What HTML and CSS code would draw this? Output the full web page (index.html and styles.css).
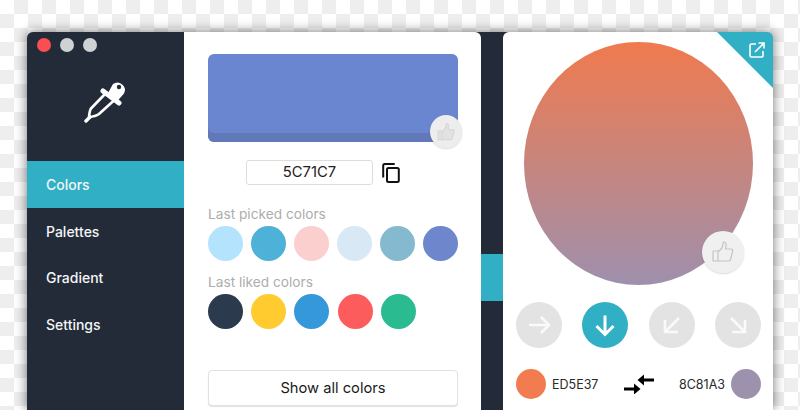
FILE: index.html
```html
<!DOCTYPE html>
<html lang="en">
<head>
  <meta charset="UTF-8">
  <title>Colors</title>
  <link rel="stylesheet" href="styles.css">
</head>
<body>
  <div class="window">
    <aside class="sidebar">
      <div class="traffic">
        <span class="light red"></span>
        <span class="light"></span>
        <span class="light"></span>
      </div>
      <div class="logo">
        <svg width="44" height="44" viewBox="0 0 44 44">
          <path d="M2 41l4-4" fill="none" stroke="#fff" stroke-width="3.400" stroke-linecap="round"/>
          <path d="M21 14l-14 14.500q-1.500 2.500-2 8.500 6.500-.5 10-3l16-14.500" fill="none" stroke="#fff" stroke-width="2.600" stroke-linejoin="round"/>
          <path d="M19 11l16 12" stroke="#fff" stroke-width="5" stroke-linecap="round"/>
          <path d="M24 13l5-9a7.500 7.500 0 0 1 11 9.500l-7 8z" fill="#fff"/>
          <circle cx="35" cy="7" r="2.200" fill="#232b39"/>
        </svg>
      </div>
      <nav class="nav">
        <a class="nav-item active">Colors</a>
        <a class="nav-item">Palettes</a>
        <a class="nav-item">Gradient</a>
        <a class="nav-item">Settings</a>
      </nav>
    </aside>

    <main class="picker">
      <div class="swatch">
        <button class="like like-small" type="button">
          <svg width="20" height="20" viewBox="0 0 24 24"><path d="M2.500 11h4.500v10h-4.500zM7 12l4-4 1.500-6c2 0 3 1.500 2.500 4l-.5 3h5.500c1.500 0 2 1.500 1.500 3l-2 7.500c-.3 1-1 1.500-2 1.500h-10.500z" fill="#e2e2e2" stroke="#d8d8d8" stroke-width="1.500" stroke-linejoin="round"/></svg>
        </button>
      </div>
      <div class="hex-row">
        <div class="hex-input">5C71C7</div>
        <svg class="copy" width="18" height="20" viewBox="0 0 18 20">
          <path d="M1.200 14.500v-12a1.500 1.500 0 0 1 1.500-1.500h10" fill="none" stroke="#111" stroke-width="2"/>
          <rect x="5" y="5" width="11.800" height="14" rx="1.500" fill="none" stroke="#111" stroke-width="2"/>
        </svg>
      </div>
      <p class="section-label">Last picked colors</p>
      <div class="dots">
        <span class="dot c-sky"></span>
        <span class="dot c-blue"></span>
        <span class="dot c-pink"></span>
        <span class="dot c-mist"></span>
        <span class="dot c-steel"></span>
        <span class="dot c-indigo"></span>
      </div>
      <p class="section-label liked">Last liked colors</p>
      <div class="dots">
        <span class="dot c-navy"></span>
        <span class="dot c-yellow"></span>
        <span class="dot c-azure"></span>
        <span class="dot c-red"></span>
        <span class="dot c-green"></span>
      </div>
      <button class="show-all" type="button">Show all colors</button>
    </main>

    <div class="strip"><span class="strip-mark"></span></div>

    <section class="gradient">
      <div class="corner">
        <svg width="16" height="16" viewBox="0 0 16 16" fill="none" stroke="#fff" stroke-width="1.600">
          <path d="M7 2h-4.500a1.500 1.500 0 0 0-1.500 1.500v10a1.500 1.500 0 0 0 1.500 1.500h10a1.500 1.500 0 0 0 1.500-1.500v-4.500"/>
          <path d="M6 10l8.500-8.500M9.500 1h5.500v5.500"/>
        </svg>
      </div>
      <div class="preview">
        <div class="circle"></div>
        <button class="like like-big" type="button">
          <svg width="24" height="24" viewBox="0 0 24 24"><path d="M2 11h5v10h-5zM7 12l4-4 1.500-6c2 0 3 1.500 2.500 4l-.5 3h5.500c1.500 0 2 1.500 1.500 3l-2 7.500c-.3 1-1 1.500-2 1.500h-10.500z" fill="none" stroke="#c4c4c8" stroke-width="1.200" stroke-linejoin="round"/></svg>
        </button>
      </div>
      <div class="dirs">
        <span class="dir">
          <svg width="26" height="26" viewBox="0 0 26 26" class="dir-icon"><path d="M3 13h20M15 5l8 8-8 8"/></svg>
        </span>
        <span class="dir on">
          <svg width="26" height="26" viewBox="0 0 26 26" class="dir-icon"><path d="M13 3.500v19M4.500 14l8.500 8.500 8.500-8.500"/></svg>
        </span>
        <span class="dir">
          <svg width="26" height="26" viewBox="0 0 26 26" class="dir-icon"><path d="M20 6l-14 14M6 8v12h13"/></svg>
        </span>
        <span class="dir">
          <svg width="26" height="26" viewBox="0 0 26 26" class="dir-icon"><path d="M6 6l14 14M20 8v12h-13"/></svg>
        </span>
      </div>
      <div class="stops">
        <div class="stop-group">
          <span class="stop c-orange"></span>
          <span class="stop-code">ED5E37</span>
        </div>
        <svg class="swap" width="30" height="20" viewBox="0 0 30 20" fill="none" stroke="#000" stroke-width="3">
          <path d="M0 15h12M30 6h-12"/>
          <path d="M10 9.500l6.500 5.500-6.500 5.500zM20 .5l-6.500 5.500 6.500 5.500z" fill="#000" stroke="none"/>
        </svg>
        <div class="stop-group end">
          <span class="stop-code">8C81A3</span>
          <span class="stop c-mauve"></span>
        </div>
      </div>
    </section>
  </div>
</body>
</html>
```

FILE: styles.css
```css
html, body {
  height: 100%;
}

body {
  margin: 0;
  padding: 32px 27px 0;
  box-sizing: border-box;
  overflow: hidden;
  font-family: 'Inter', 'Liberation Sans', sans-serif;
  background: repeating-conic-gradient(#eeeeee 0 25%, #ffffff 0 50%) 0 0 / 28px 28px;
}

.window {
  display: flex;
  width: 746px;
  height: 378px;
  background: #232b39;
  border-radius: 6px 6px 0 0;
  box-shadow: 0 0 12px rgba(0, 0, 0, 0.55);
}

/* sidebar */
.sidebar {
  width: 157px;
  flex-shrink: 0;
}

.traffic {
  display: flex;
  gap: 9.300px;
  padding: 6px 0 0 9.700px;
}

.light {
  width: 14px;
  height: 14px;
  border-radius: 50%;
  background: #cfd2d4;
}

.light.red {
  background: #fc4d50;
}

.logo {
  display: flex;
  justify-content: center;
  height: 81px;
  padding-top: 28px;
}

.nav-item {
  display: flex;
  align-items: center;
  height: 46.700px;
  padding-left: 19px;
  color: #f3f5f6;
  font-size: 14px;
  font-weight: 500;
}

.nav-item.active {
  background: #31afc4;
}

/* middle panel */
.picker {
  width: 297px;
  flex-shrink: 0;
  box-sizing: border-box;
  padding: 22px 23px 0 24px;
  background: #fff;
  border-radius: 0 6px 0 0;
}

.swatch {
  position: relative;
  height: 88px;
  background: #6b86d0;
  border-radius: 6px;
  box-shadow: inset 0 -9px 0 #6279b9;
}

.like {
  position: absolute;
  display: flex;
  align-items: center;
  justify-content: center;
  padding: 0;
  border: 0;
  border-radius: 50%;
  background: #ededed;
  box-shadow: 0 1px 2px rgba(0, 0, 0, 0.15);
}

.like-small {
  right: -4px;
  bottom: -6px;
  width: 32px;
  height: 33px;
}

.like-big {
  right: 17px;
  bottom: 12px;
  width: 42px;
  height: 42px;
  background: #f0f0f1;
}

.hex-row {
  display: flex;
  align-items: center;
  height: 25px;
  margin: 18px 0 0 38px;
}

.hex-input {
  width: 127px;
  height: 25px;
  box-sizing: border-box;
  border: 1px solid #dddddd;
  border-radius: 3px;
  color: #222;
  font-size: 14.800px;
  line-height: 23px;
  text-align: center;
}

.copy {
  margin-left: 9px;
}

.section-label {
  margin: 21px 0 0;
  color: #adadad;
  font-size: 13.700px;
  line-height: 17px;
}

.section-label.liked {
  margin-top: 13px;
}

.dots {
  display: flex;
  gap: 8.200px;
  margin-top: 3px;
}

.dot {
  width: 35px;
  height: 35px;
  border-radius: 50%;
}

.c-sky { background: #b3e3fd; }
.c-blue { background: #4db1d8; }
.c-pink { background: #fccfcf; }
.c-mist { background: #d8e9f5; }
.c-steel { background: #84b9cf; }
.c-indigo { background: #6e86cb; }
.c-navy { background: #2c3a4e; }
.c-yellow { background: #ffcb2f; }
.c-azure { background: #3498db; }
.c-red { background: #fc5c5c; }
.c-green { background: #2abb90; }

.show-all {
  display: block;
  width: 250px;
  height: 36px;
  margin-top: 41px;
  border: 1px solid #e2e2e2;
  border-radius: 4px;
  background: #fff;
  box-shadow: 0 1px 1px rgba(0, 0, 0, 0.12);
  color: #1a1a1a;
  font-family: inherit;
  font-size: 14.700px;
}

/* dark strip between the panels */
.strip {
  width: 22px;
  flex-shrink: 0;
  padding-top: 222px;
}

.strip-mark {
  display: block;
  height: 47px;
  background: #31afc4;
}

/* right panel */
.gradient {
  position: relative;
  flex: 1;
  box-sizing: border-box;
  padding: 10px 12px 0 13px;
  background: #fff;
  border-radius: 6px 6px 0 0;
}

.corner {
  position: absolute;
  top: 0;
  right: 0;
  width: 56px;
  height: 56px;
  background: #31afc4;
  border-radius: 0 6px 0 0;
  clip-path: polygon(0 0, 100% 0, 100% 100%);
}

.corner svg {
  position: absolute;
  top: 10px;
  right: 8px;
}

.preview {
  position: relative;
  height: 243px;
  padding: 0 8px;
}

.circle {
  width: 229px;
  height: 243px;
  border-radius: 50%;
  background: linear-gradient(#f07a4e, #9e90ad);
}

.dirs {
  display: flex;
  justify-content: space-between;
  padding-top: 17px;
}

.dir {
  display: flex;
  align-items: center;
  justify-content: center;
  width: 46px;
  height: 46px;
  border-radius: 50%;
  background: #e3e3e3;
}

.dir.on {
  background: #31afc4;
}

.dir-icon {
  fill: none;
  stroke: #fff;
  stroke-width: 2.600;
  opacity: 0.85;
}

.dir.on .dir-icon {
  stroke-width: 3;
  opacity: 1;
}

.stops {
  display: grid;
  grid-template-columns: 1fr auto 1fr;
  align-items: center;
  margin-top: 21px;
}

.stop-group {
  display: flex;
  align-items: center;
  gap: 6px;
}

.stop-group.end {
  justify-content: flex-end;
}

.stop {
  width: 30px;
  height: 30px;
  border-radius: 50%;
}

.c-orange { background: #f27c4f; }
.c-mauve { background: #9d92ad; }

.stop-code {
  color: #2a2a2a;
  font-size: 12.500px;
}
```
